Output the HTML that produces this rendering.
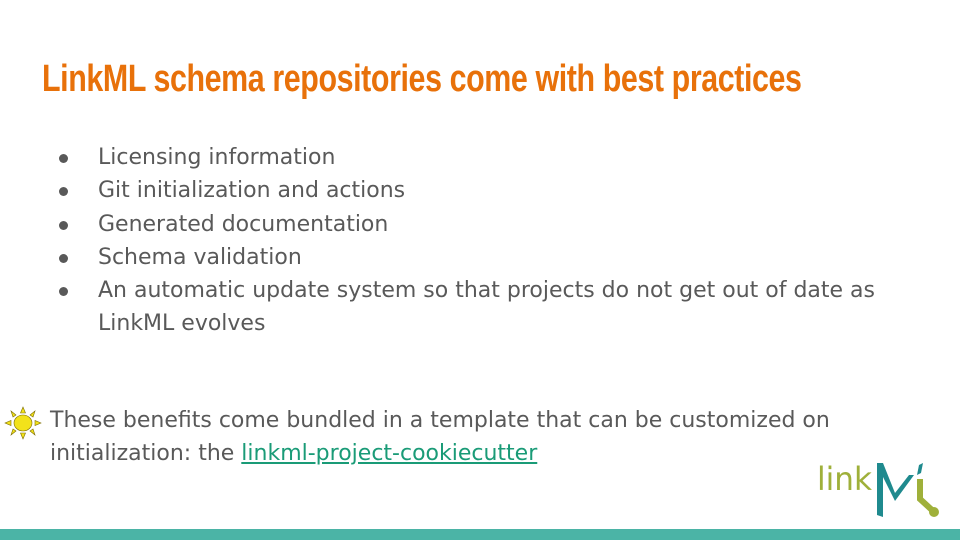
<!DOCTYPE html>
<html><head><style>
body{margin:0;width:960px;height:540px;background:#fff;position:relative;overflow:hidden;font-family:"Liberation Sans",sans-serif;}
.t{position:absolute;left:42px;top:58px;font-size:38px;font-weight:bold;color:#e8710a;white-space:nowrap;transform:scaleX(0.8);transform-origin:left top;letter-spacing:-0.5px}
ul{position:absolute;left:0;top:141px;margin:0;padding:0;list-style:none;color:#595959;font-family:"DejaVu Sans",sans-serif;font-size:22px;line-height:33.3px}
li{position:relative;padding-left:98px;width:800px}
li:before{content:"";position:absolute;left:59px;top:13px;width:9px;height:9px;border-radius:50%;background:#595959}
.p{position:absolute;left:50px;top:404px;font-family:"DejaVu Sans",sans-serif;font-size:22px;line-height:33px;color:#595959;width:830px}
a{color:#1a9b77;text-decoration:underline}
.bar{position:absolute;left:0;top:529px;width:960px;height:11px;background:#4bb4a6}
</style></head><body>
<div class="t">LinkML schema repositories come with best practices</div>
<ul>
<li>Licensing information</li>
<li>Git initialization and actions</li>
<li>Generated documentation</li>
<li>Schema validation</li>
<li>An automatic update system so that projects do not get out of date as LinkML evolves</li>
</ul>
<svg style="position:absolute;left:4px;top:406px" width="38" height="34" viewBox="0 0 38 34">
<g fill="#f2e21b" stroke="#7a6a00" stroke-width="0.6">
<polygon points="19,1 16.5,7 21.5,7"/><polygon points="19,33 16.5,27 21.5,27"/>
<polygon points="1,17 7,14.5 7,19.5"/><polygon points="37,17 31,14.5 31,19.5"/>
<polygon points="7,5 12,9 9,11"/><polygon points="31,5 26,9 29,11"/>
<polygon points="7,29 12,25 9,23"/><polygon points="31,29 26,25 29,23"/>
<ellipse cx="19" cy="17" rx="9" ry="8"/></g></svg>
<div class="p">These benefits come bundled in a template that can be customized on initialization: the <a>linkml-project-cookiecutter</a></div>
<svg style="position:absolute;left:815px;top:455px" width="130" height="70" viewBox="0 0 130 70">
<text x="2" y="35" font-family="DejaVu Sans,sans-serif" font-size="32" fill="#9fb03a" textLength="55" lengthAdjust="spacingAndGlyphs">link</text>
<polygon points="62,8 68,8 80,38 94,20 99,20 80,46 68,22 68,62 62,60" fill="#1f8a8e"/>
<polygon points="104,10 108,8 106,18 102,20" fill="#1f8a8e"/>
<path d="M105,24 L105,44 L118,56" stroke="#9fb03a" stroke-width="6" fill="none"/>
<circle cx="119" cy="57" r="5" fill="#9fb03a"/>
</svg>
<div class="bar"></div>
</body></html>
